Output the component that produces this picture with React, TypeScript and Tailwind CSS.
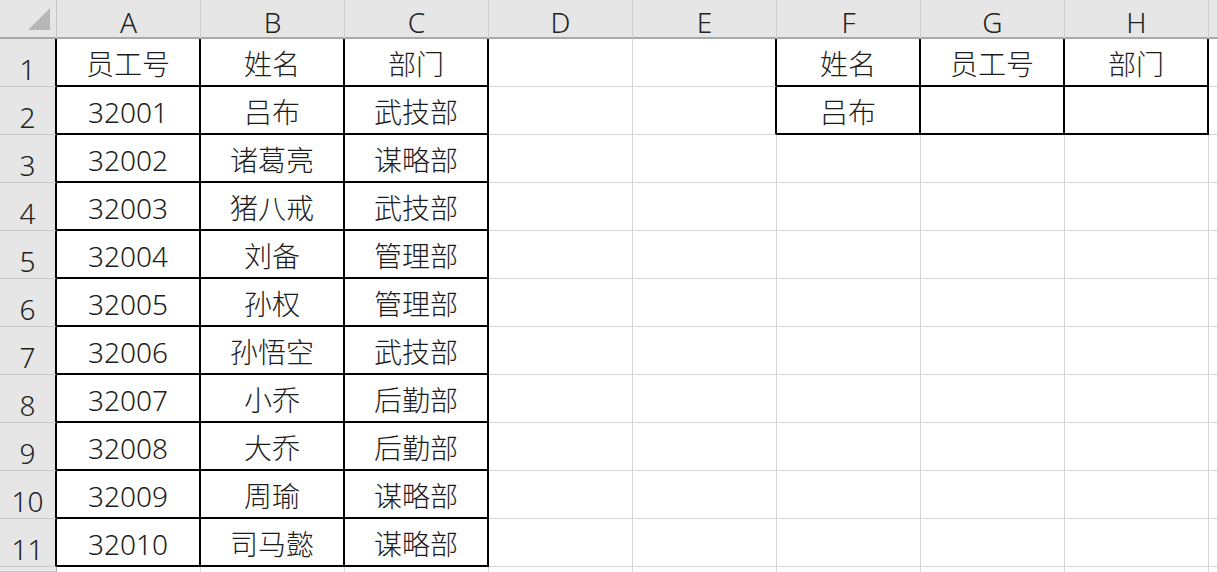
import React from "react";

const COL_LETTERS = ["A", "B", "C", "D", "E", "F", "G", "H", ""];

const ROWS: string[][] = [
  ["员工号", "姓名", "部门", "", "", "姓名", "员工号", "部门"],
  ["32001", "吕布", "武技部", "", "", "吕布", "", ""],
  ["32002", "诸葛亮", "谋略部"],
  ["32003", "猪八戒", "武技部"],
  ["32004", "刘备", "管理部"],
  ["32005", "孙权", "管理部"],
  ["32006", "孙悟空", "武技部"],
  ["32007", "小乔", "后勤部"],
  ["32008", "大乔", "后勤部"],
  ["32009", "周瑜", "谋略部"],
  ["32010", "司马懿", "谋略部"],
];

// which cell edges carry the thick black table border
function rightBlack(r: number, c: number) {
  return c <= 2 || (r <= 2 && c >= 4 && c <= 7);
}
function bottomBlack(r: number, c: number) {
  return c <= 2 || (r <= 2 && c >= 5 && c <= 7);
}

function Corner() {
  return (
    <div className="border-r border-b-2 border-r-[#c4c4c4] border-b-[#a9a9a9] bg-[#e6e6e6] flex items-end justify-end pb-[7px] pr-[6px]">
      <svg width="22" height="22" viewBox="0 0 22 22">
        <polygon points="22,0 22,22 0,22" fill="#b7b7b7" />
      </svg>
    </div>
  );
}

function ColHeader({ label }: { label: string }) {
  return (
    <div className="border-r border-b-2 border-r-[#cdcdcd] border-b-[#a9a9a9] bg-[#e6e6e6] flex items-center justify-center pt-[7px] text-[28px] font-light leading-none text-[#222]">
      {label}
    </div>
  );
}

function RowHeader({ n }: { n: number }) {
  return (
    <div
      className={`border-b border-b-[#c9c9c9] bg-[#e6e6e6] flex items-end justify-center pb-[3px] text-[28px] font-light leading-none text-[#222] ${
        n <= 11 ? "border-r-2 border-r-black" : "border-r border-r-[#a9a9a9]"
      }`}
    >
      {n <= 11 ? n : ""}
    </div>
  );
}

function Cell({ r, c, text }: { r: number; c: number; text: string }) {
  const rb = r <= 11 && rightBlack(r, c);
  const bb = r <= 11 && bottomBlack(r, c);
  return (
    <div
      className={`bg-white flex items-center justify-center pt-[4px] text-[28px] font-light leading-none text-[#1c1c1c] ${
        rb ? "border-r-2 border-r-black" : "border-r border-r-[#d6d6d6]"
      } ${r > 11 ? "" : bb ? "border-b-2 border-b-black" : "border-b border-b-[#d6d6d6]"}`}
    >
      {text}
    </div>
  );
}

export default function App() {
  return (
    <div
      className="w-[1218px] h-[572px] overflow-hidden bg-white grid grid-cols-[57px_repeat(8,144px)_1fr] grid-rows-[39px_repeat(11,48px)_1fr]"
      style={{ fontFamily: '"Noto Sans", "Noto Sans CJK SC", sans-serif' }}
    >
      <Corner />
      {COL_LETTERS.map((l, i) => (
        <ColHeader key={i} label={l} />
      ))}
      {Array.from({ length: 12 }, (_, i) => i + 1).map((r) => (
        <React.Fragment key={r}>
          <RowHeader n={r} />
          {COL_LETTERS.map((_, c) => (
            <Cell key={c} r={r} c={c} text={(ROWS[r - 1] && ROWS[r - 1][c]) || ""} />
          ))}
        </React.Fragment>
      ))}
    </div>
  );
}
